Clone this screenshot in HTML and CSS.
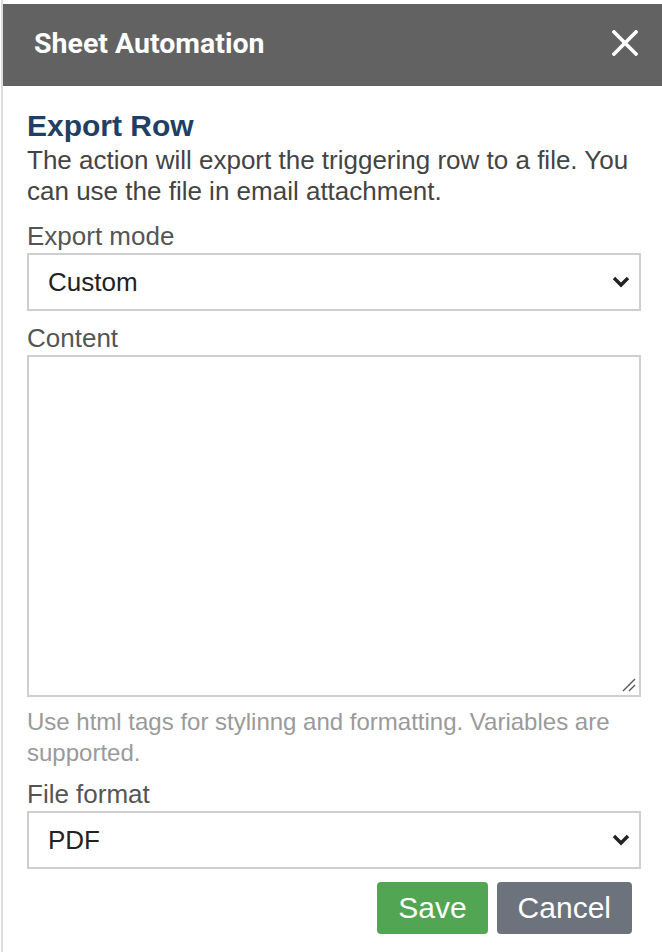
FILE: index.html
```html
<!DOCTYPE html>
<html>
<head>
<meta charset="utf-8">
<link rel="stylesheet" href="styles.css">
</head>
<body>
<div class="panel">
  <div class="header">
    <span class="title">Sheet Automation</span>
    <svg class="close" width="26" height="26" viewBox="0 0 26 26"><path d="M2 2 L24 24 M24 2 L2 24" stroke="#fff" stroke-width="3.6" stroke-linecap="square"/></svg>
  </div>
  <div class="body">
    <h2 class="heading">Export Row</h2>
    <p class="desc">The action will export the triggering row to a file. You can use the file in email attachment.</p>
    <label class="label label-first">Export mode</label>
    <div class="select-wrap">
      <select class="select"><option>Custom</option></select>
      <svg class="chev" width="18" height="12" viewBox="0 0 18 12"><path d="M2 2 L9 9 L16 2" fill="none" stroke="#222" stroke-width="3.4"/></svg>
    </div>
    <label class="label label-content">Content</label>
    <div class="area-wrap">
      <textarea class="area"></textarea>
      <svg class="grip" width="14" height="14" viewBox="0 0 14 14"><path d="M1 13 L13 1 M7 13 L13 7" stroke="#555" stroke-width="1.4"/></svg>
    </div>
    <p class="help">Use html tags for stylinng and formatting. Variables are supported.</p>
    <label class="label label-format">File format</label>
    <div class="select-wrap">
      <select class="select"><option>PDF</option></select>
      <svg class="chev" width="18" height="12" viewBox="0 0 18 12"><path d="M2 2 L9 9 L16 2" fill="none" stroke="#222" stroke-width="3.4"/></svg>
    </div>
    <div class="actions">
      <button class="btn save">Save</button>
      <button class="btn cancel">Cancel</button>
    </div>
  </div>
</div>
</body>
</html>
```
FILE: styles.css
```css
html, body {
  margin: 0;
  padding: 0;
  background: #fff;
}
body {
  font-family: "Liberation Sans", Arial, sans-serif;
}
.panel {
  margin-left: 1px;
  border-left: 2px solid #dcdcdc;
  padding-top: 4px;
  height: 948px;
}
.header {
  height: 82px;
  background: #626262;
  display: flex;
  align-items: center;
  justify-content: space-between;
  padding: 0 24px 0 31px;
}
.title {
  font-family: Roboto, "Liberation Sans", sans-serif;
  font-weight: bold;
  font-size: 28.5px;
  color: #fff;
  margin-top: -3px;
}
.close {
  display: block;
  margin-top: -4px;
}
.body {
  padding: 22px 21px 0 24px;
  display: flex;
  flex-direction: column;
}
.heading {
  margin: 0;
  font-size: 30px;
  line-height: 36px;
  font-weight: bold;
  color: #213f62;
}
.desc {
  margin: 1px 0 0;
  font-size: 26px;
  line-height: 31px;
  color: #444;
}
.label {
  display: block;
  font-size: 26px;
  line-height: 31px;
  color: #555;
}
.label-first {
  margin-top: 14px;
}
.label-content {
  margin-top: 12px;
}
.label-format {
  margin-top: 11px;
}
.select-wrap {
  position: relative;
  margin-top: 1px;
}
.select {
  appearance: none;
  -webkit-appearance: none;
  display: block;
  width: 100%;
  height: 58px;
  border: 2px solid #cfcfcf;
  border-radius: 0;
  background: #fff;
  font-family: "Liberation Sans", Arial, sans-serif;
  font-size: 26px;
  color: #222;
  padding: 0 19px;
  margin: 0;
  outline: none;
}
.chev {
  position: absolute;
  right: 11px;
  top: 23px;
}
.area-wrap {
  position: relative;
  margin-top: 1px;
}
.area {
  display: block;
  width: 100%;
  height: 342px;
  box-sizing: border-box;
  border: 2px solid #cfcfcf;
  border-radius: 0;
  margin: 0;
  resize: none;
  outline: none;
}
.grip {
  position: absolute;
  right: 5px;
  bottom: 5px;
}
.help {
  margin: 9px 0 0;
  font-size: 24px;
  line-height: 31px;
  color: #9a9a9a;
}
.actions {
  display: flex;
  justify-content: flex-end;
  gap: 9px;
  margin-top: 13px;
  padding-right: 9px;
}
.btn {
  border: none;
  border-radius: 4px;
  color: #fff;
  font-family: "Liberation Sans", Arial, sans-serif;
  font-size: 30px;
  height: 52px;
  padding: 0 21px;
}
.save {
  background: #52a552;
}
.cancel {
  background: #6c737c;
}
```
